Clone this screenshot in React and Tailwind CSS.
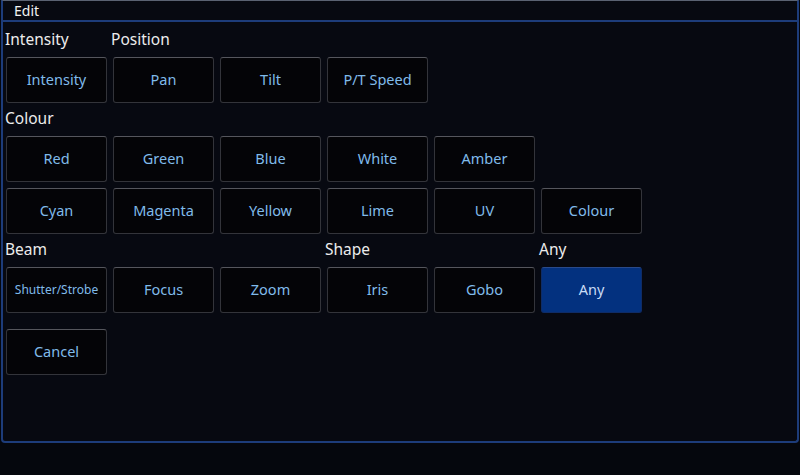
import React from "react";

const font = { fontFamily: '"Noto Sans", "Open Sans", sans-serif' };

function Btn({ children, active, small }) {
  return (
    <div
      className={
        "w-[101px] h-[46px] rounded-[3px] flex items-center justify-center border " +
        (active
          ? "bg-[#03317f] border-[#0f2c66] border-t-[#2a4a8a] text-[#c9dcf5]"
          : "bg-[#040407] border-[#33343a] border-t-[#55565d] text-[#80bbea]") +
        (small ? " text-[12px]" : " text-[14.5px]")
      }
    >
      {children}
    </div>
  );
}

function Label({ children, className = "" }) {
  return (
    <div className={"h-[22px] flex items-center text-[15.5px] text-[#ececec] " + className}>
      {children}
    </div>
  );
}

const Gap = () => <div className="w-[101px]" />;

export default function App() {
  return (
    <div className="w-[800px] h-[475px] bg-[#05070d] overflow-hidden" style={font}>
      <div className="ml-[1px] w-[798px] h-[443px] border-2 border-t border-[#1d3c7a] border-t-[#5a6272] rounded-b-[4px] bg-[#070911] flex flex-col">
        <div className="h-[21px] border-b-2 border-[#1d3c7a] flex items-center pl-[11px] text-[14px] text-[#f2f2f2]">
          Edit
        </div>
        <div className="pl-[3px] flex flex-col">
          <div className="mt-[7px] flex gap-[6px]">
            <Label className="w-[101px] -ml-[1px]">Intensity</Label>
            <Label className="w-[101px] -ml-[1px]">Position</Label>
          </div>
          <div className="mt-[6px] flex gap-[6px]">
            <Btn>Intensity</Btn>
            <Btn>Pan</Btn>
            <Btn>Tilt</Btn>
            <Btn>P/T Speed</Btn>
          </div>
          <div className="mt-[5px] flex gap-[6px]">
            <Label className="w-[101px] -ml-[1px]">Colour</Label>
          </div>
          <div className="mt-[6px] flex gap-[6px]">
            <Btn>Red</Btn>
            <Btn>Green</Btn>
            <Btn>Blue</Btn>
            <Btn>White</Btn>
            <Btn>Amber</Btn>
          </div>
          <div className="mt-[6px] flex gap-[6px]">
            <Btn>Cyan</Btn>
            <Btn>Magenta</Btn>
            <Btn>Yellow</Btn>
            <Btn>Lime</Btn>
            <Btn>UV</Btn>
            <Btn>Colour</Btn>
          </div>
          <div className="mt-[5px] flex gap-[6px]">
            <Label className="w-[101px] -ml-[1px]">Beam</Label>
            <Gap />
            <Gap />
            <Label className="w-[101px] -ml-[1px]">Shape</Label>
            <Gap />
            <Label className="w-[101px]">Any</Label>
          </div>
          <div className="mt-[6px] flex gap-[6px]">
            <Btn small>Shutter/Strobe</Btn>
            <Btn>Focus</Btn>
            <Btn>Zoom</Btn>
            <Btn>Iris</Btn>
            <Btn>Gobo</Btn>
            <Btn active>Any</Btn>
          </div>
          <div className="mt-[16px] flex gap-[6px]">
            <Btn>Cancel</Btn>
          </div>
        </div>
      </div>
    </div>
  );
}
